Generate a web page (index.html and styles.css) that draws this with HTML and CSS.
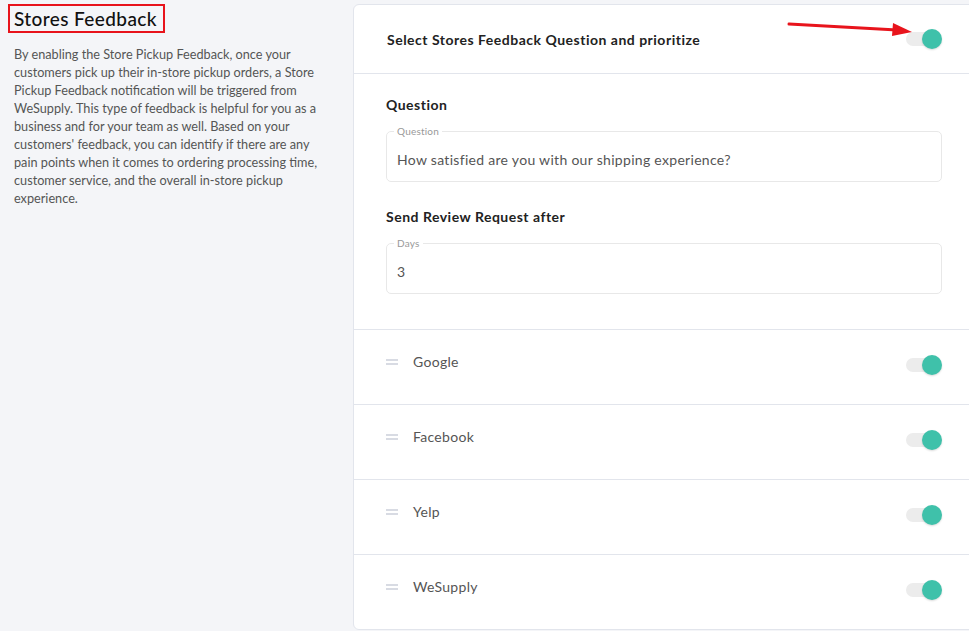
FILE: index.html
```html
<!DOCTYPE html>
<html lang="en">
<head>
    <meta charset="UTF-8">
    <meta name="viewport" content="width=device-width, initial-scale=1.0">
    <title>Stores Feedback</title>
    <link rel="stylesheet" href="styles.css">
</head>
<body>
    <div class="page">
        <aside class="intro">
            <h2 class="intro-title">Stores Feedback</h2>
            <p class="intro-text">By enabling the Store Pickup Feedback, once your customers pick up their in-store pickup orders, a Store Pickup Feedback notification will be triggered from WeSupply. This type of feedback is helpful for you as a business and for your team as well. Based on your customers' feedback, you can identify if there are any pain points when it comes to ordering processing time, customer service, and the overall in-store pickup experience.</p>
        </aside>

        <div class="card">
            <div class="card-header">
                <h3>Select Stores Feedback Question and prioritize</h3>
                <span class="toggle on"><span class="knob"></span></span>
                <!-- annotation arrow -->
                <svg class="arrow" width="130" height="20" viewBox="0 0 130 20">
                    <line x1="2" y1="4" x2="110" y2="10" stroke="#e8141c" stroke-width="3" stroke-linecap="round"/>
                    <polygon points="106,3 125,12 105,16" fill="#e8141c"/>
                </svg>
            </div>

            <div class="card-body">
                <div class="field-label">Question</div>
                <fieldset class="outlined">
                    <legend>Question</legend>
                    <div class="value">How satisfied are you with our shipping experience?</div>
                </fieldset>

                <div class="field-label second">Send Review Request after</div>
                <fieldset class="outlined">
                    <legend>Days</legend>
                    <div class="value">3</div>
                </fieldset>
            </div>

            <ul class="channels">
                <li class="channel">
                    <span class="handle"></span>
                    <span class="channel-name">Google</span>
                    <span class="toggle on"><span class="knob"></span></span>
                </li>
                <li class="channel">
                    <span class="handle"></span>
                    <span class="channel-name">Facebook</span>
                    <span class="toggle on"><span class="knob"></span></span>
                </li>
                <li class="channel">
                    <span class="handle"></span>
                    <span class="channel-name">Yelp</span>
                    <span class="toggle on"><span class="knob"></span></span>
                </li>
                <li class="channel">
                    <span class="handle"></span>
                    <span class="channel-name">WeSupply</span>
                    <span class="toggle on"><span class="knob"></span></span>
                </li>
            </ul>
        </div>
    </div>
</body>
</html>
```

FILE: styles.css
```css
body {
    margin: 0;
    padding: 0;
    background-color: #f4f5f8;
    font-family: Lato, "Open Sans", sans-serif;
    color: #222;
    overflow: hidden;
}
.page {
    display: flex;
    align-items: flex-start;
    width: 980px;
}
.intro {
    flex: 0 0 353px;
    box-sizing: border-box;
    padding: 4px 30px 0 8px;
}
.intro-title {
    display: inline-block;
    margin: 0;
    padding: 0 6px 0 4px;
    border: 2px solid #e8141c;
    font-size: 19px;
    font-weight: 500;
    line-height: 25px;
    letter-spacing: 0.4px;
    color: #111;
}
.intro-text {
    margin: 12px 0 0 6px;
    font-size: 12.7px;
    line-height: 18px;
    color: #555;
}
.card {
    flex: 0 0 620px;
    margin-top: 4px;
    background-color: #fff;
    border: 1px solid #e2e5ec;
    border-radius: 6px;
}
.card-header {
    position: relative;
    display: flex;
    align-items: center;
    justify-content: space-between;
    height: 68px;
    padding: 0 32px 0 33px;
    border-bottom: 1px solid #e2e5ec;
}
.card-header h3 {
    margin: 0;
    font-size: 14px;
    font-weight: 700;
    letter-spacing: 0.5px;
    color: #222;
}
.arrow {
    position: absolute;
    left: 433px;
    top: 15px;
}
.card-body {
    padding: 22px 32px 35px 32px;
}
.field-label {
    font-size: 14px;
    font-weight: 700;
    line-height: 18px;
    letter-spacing: 0.5px;
    margin-bottom: 11px;
}
.field-label.second {
    margin-top: 26px;
}
.outlined {
    margin: 0;
    padding: 0 10px;
    border: 1px solid #e8e8e8;
    border-radius: 5px;
}
.outlined legend {
    padding: 0 3px;
    margin-left: -3px;
    font-size: 10px;
    line-height: 12px;
    letter-spacing: 0.2px;
    color: #999;
}
.outlined .value {
    padding: 13px 0 11px;
    font-size: 14px;
    line-height: 20px;
    letter-spacing: 0.3px;
    color: #555;
}
.channels {
    list-style: none;
    margin: 0;
    padding: 0;
}
.channel {
    display: flex;
    align-items: center;
    box-sizing: border-box;
    height: 75px;
    padding: 0 32px 5px 32px;
    border-top: 1px solid #e2e5ec;
}
.handle {
    width: 12px;
    height: 2px;
    border-top: 2px solid #d8dbe3;
    border-bottom: 2px solid #d8dbe3;
    margin-top: -6px;
}
.channel-name {
    flex: 1;
    margin-left: 15px;
    margin-top: -6px;
    font-size: 14px;
    letter-spacing: 0.3px;
    color: #555;
}
.toggle {
    position: relative;
    display: inline-block;
    width: 36px;
    height: 14px;
}
.toggle::before {
    content: "";
    position: absolute;
    left: 0;
    top: 0;
    width: 30px;
    height: 14px;
    border-radius: 7px;
    background-color: #ececec;
}
.toggle .knob {
    position: absolute;
    right: 0;
    top: -3px;
    width: 20px;
    height: 20px;
    border-radius: 50%;
    background-color: #3fc1aa;
    box-shadow: 0 1px 2px rgba(0,0,0,0.15);
}
```
